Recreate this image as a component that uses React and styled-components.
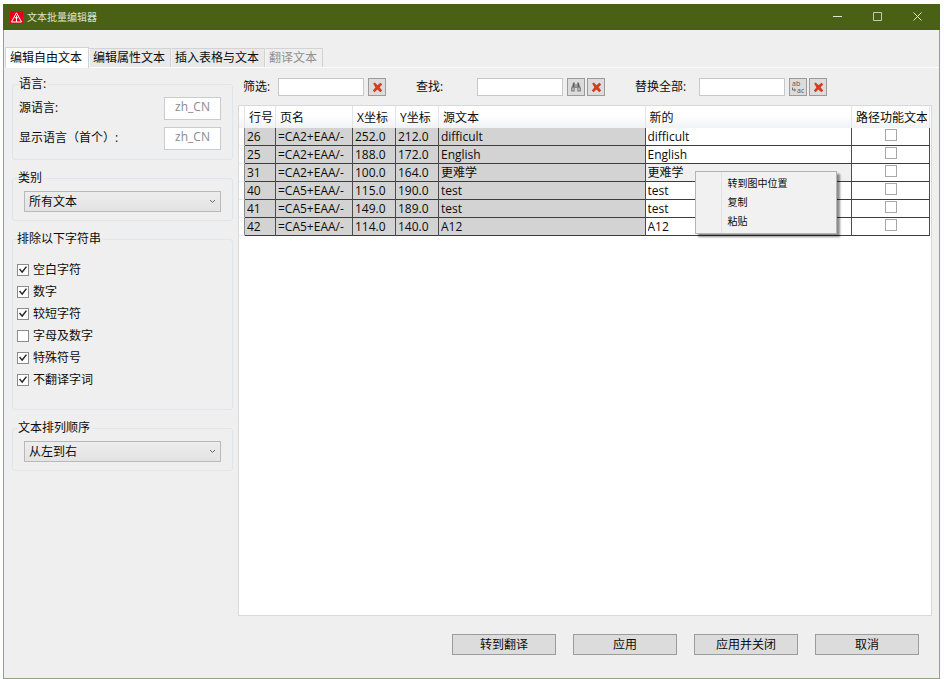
import React, { useState } from 'react';
import styled, { createGlobalStyle } from 'styled-components';

const GlobalStyle = createGlobalStyle`
    * {
        box-sizing: border-box;
    }

    body {
        margin: 0;
        background: #fdfdfd;
        color: #0c0c0c;
        font: 12px/16px "Open Sans", "Noto Sans CJK SC", sans-serif;
    }

    button, input, select {
        font: inherit;
        color: inherit;
        margin: 0;
        border-radius: 0;
    }
`;

const Window = styled.main`
    display: flex;
    flex-direction: column;
    min-height: calc(100vh - 4px);
    margin: 4px 4px 0 3px;
    background: #efefef;
    border: 1px solid #96a37c;
    border-top: none;
`;

const TitleBar = styled.header`
    display: flex;
    align-items: center;
    height: 26px;
    margin: 0 -1px;
    padding: 0 2px 0 7px;
    background: #4a6015;
    color: #dfe3d4;

    h1 {
        flex: 1;
        margin: 0 0 0 4px;
        font-size: 10px;
        font-weight: normal;
    }
`;

const WindowButton = styled.button`
    display: flex;
    align-items: center;
    justify-content: center;
    width: 40px;
    height: 26px;
    padding: 0;
    border: none;
    background: transparent;

    &:hover {
        background: #60772a;
    }
`;

const Tabs = styled.nav`
    display: flex;
    align-items: flex-end;
    height: 38px;
    padding-left: 1px;
    border-bottom: 1px solid #fbfbfb;
`;

const Tab = styled.button`
    height: ${({ $active }) => ($active ? 21 : 19)}px;
    margin-bottom: ${({ $active }) => ($active ? -1 : 0)}px;
    padding: ${({ $active }) => ($active ? '0 6px 0 4px' : '0 5px 0 3px')};
    border: 1px solid #d3d3d3;
    border-left-color: ${({ $active }) => ($active ? '#d3d3d3' : '#f4f4f4')};
    border-bottom: none;
    background: ${({ $active }) => ($active ? '#fff' : '#e9e9e9')};
    white-space: nowrap;

    &:disabled {
        color: #8f8f8f;
        background: #efefef;
    }
`;

const Content = styled.div`
    flex: 1;
    display: flex;
    gap: 5px;
    padding: 8px 7px 0 8px;
`;

const Sidebar = styled.aside`
    display: flex;
    flex-direction: column;
    gap: 10px;
    flex: 0 0 221px;
`;

const Group = styled.fieldset`
    min-width: 0;
    margin: 0;
    padding: ${({ $pad }) => $pad || '5px 11px 8px'};
    border: 1px solid #dde6ea;
    border-radius: 3px;

    legend {
        margin-left: ${({ $legend }) => $legend || 0}px;
        padding: 0 2px 0 0;
    }
`;

const LanguageRow = styled.label`
    display: flex;
    justify-content: space-between;
    height: 30px;
    line-height: 22px;

    input {
        width: 57px;
        height: 23px;
        padding: 0 0 4px;
        border: 1px solid #c9cbce;
        background: #fff;
        color: #8b8b8b;
        text-align: center;
    }
`;

const SelectBox = styled.div`
    position: relative;

    select {
        display: block;
        width: 100%;
        height: 21px;
        padding: 0 4px;
        border: 1px solid #b9b9b9;
        background: linear-gradient(#ededed, #e3e3e3);
        appearance: none;
    }

    svg {
        position: absolute;
        top: 7px;
        right: 5px;
        pointer-events: none;
    }
`;

const CheckLabel = styled.label`
    display: flex;
    align-items: center;
    gap: 4px;
    height: 22px;
`;

const CheckBox = styled.input.attrs({ type: 'checkbox' })`
    display: grid;
    place-items: center;
    flex: none;
    width: 12px;
    height: 12px;
    border: 1px solid #8c8c8c;
    background: #fff;
    appearance: none;

    &:checked::after {
        content: "";
        width: 8px;
        height: 8px;
        background: #222;
        clip-path: polygon(0 45%, 14% 32%, 38% 62%, 86% 2%, 100% 14%, 40% 92%);
    }
`;

const Main = styled.section`
    flex: 1;
    display: flex;
    flex-direction: column;
    min-width: 0;
`;

const Toolbar = styled.div`
    display: flex;
    gap: 30px;
    padding: 2px 0 9px 5px;
`;

const SearchGroup = styled.div`
    display: flex;
    align-items: center;
    gap: 2px;

    label {
        width: ${({ $label }) => $label}px;
        margin-right: -2px;
        white-space: nowrap;
    }

    input {
        width: 86px;
        height: 18px;
        margin-right: 2px;
        padding: 0 3px;
        border: 1px solid #c6c8cb;
        background: #fff;
    }
`;

const IconButton = styled.button`
    display: flex;
    align-items: center;
    justify-content: center;
    width: 18px;
    height: 18px;
    padding: 0;
    border: 1px solid #9b9b9b;
    background: #dcdcdc;
`;

const GridArea = styled.div`
    flex: 1;
    padding-right: 1px;
    border: 1px solid #d8d9da;
    background: #fff;
`;

const Table = styled.table`
    width: 100%;
    table-layout: fixed;
    border-collapse: separate;
    border-spacing: 0;
`;

const HeadCell = styled.th`
    height: 22px;
    padding: 2px 2px 0 4px;
    border-right: 1px solid #e3e5e8;
    background: linear-gradient(#fff 40%, #f1f2f4);
    font-weight: normal;
    text-align: left;

    span {
        display: block;
        overflow: hidden;
        white-space: nowrap;
    }
`;

const Cell = styled.td`
    position: relative;
    height: 18px;
    padding: 0 1px 0 2px;
    border-right: 1px solid #4c4c4c;
    border-bottom: 1px solid #3c3c3c;
    background: ${({ $tone }) => $tone || '#d3d3d3'};
    line-height: 17px;

    > span {
        display: block;
        overflow: hidden;
        white-space: nowrap;
    }

    ${CheckBox} {
        margin: -3px auto 0;
        border-color: #a8a8a8;
    }
`;

const RowHandle = styled.td`
    padding: 0;
    border-right: 1px solid #8a8a8a;
    border-bottom: 1px solid #ededed;
`;

const Menu = styled.div`
    position: absolute;
    z-index: 1;
    top: 7px;
    left: 49px;
    width: 142px;
    padding: 2px;
    border: 1px solid #b4b4b4;
    background: linear-gradient(to right, #f1f1f1 25px, #e2e2e2 25px, #e2e2e2 26px, #f1f1f1 26px);
    box-shadow: 3px 3px 2px rgba(0, 0, 0, 0.45);

    button {
        display: block;
        width: 100%;
        height: 19px;
        padding: 0 0 0 30px;
        border: none;
        background: transparent;
        font-size: 10px;
        text-align: left;
    }
`;

const Footer = styled.footer`
    display: flex;
    justify-content: flex-end;
    gap: 17px;
    padding: 18px 13px 23px;
`;

const ActionButton = styled.button`
    width: 104px;
    height: 21px;
    padding: 0;
    border: 1px solid #9c9c9c;
    background: #dcdcdc;
`;

const Logo = () => (
    <svg width="13" height="13" viewBox="0 0 13 13">
        <rect width="13" height="13" rx="1" fill="#e2001a" />
        <path d="M6.5 1.8 11.6 11H1.4Z" fill="none" stroke="#fff" strokeWidth="1" />
        <path d="M6.5 4.6V11M4.8 6.8h3.4" stroke="#fff" strokeWidth="1" />
    </svg>
);

const Chevron = () => (
    <svg width="7" height="7" viewBox="0 0 7 7" fill="none" stroke="#666">
        <path d="M1 2 3.5 4.5 6 2" />
    </svg>
);

const Cross = () => (
    <svg width="11" height="11" viewBox="0 0 11 11">
        <path d="M1.2 1.6 2.8.6 5.5 3.3 8.4.7 10.2 2.4 7.6 5.3 10.2 8.5 8.3 10.3 5.4 7.6 2.6 10.3.8 8.6 3.4 5.4Z" fill="#d33d20" />
    </svg>
);

const Binoculars = () => (
    <svg width="12" height="12" viewBox="0 0 12 12">
        <path d="M3 1.5h2v2h2v-2h2l.6 2.6L11 7v3.5H7.2V7H4.8v3.5H1V7l1.4-2.9Z" fill="#858585" />
        <path d="M2.2 7.3h1.5v2H2.2zM8.3 7.3h1.5v2H8.3zM5.5 4.5h1V6h-1z" fill="#c8c8c8" />
        <path d="M3.5 2v4M8.5 2v4" stroke="#5f5f5f" />
    </svg>
);

const Replace = () => (
    <svg width="16" height="16" viewBox="0 0 16 16" fill="#555" fontSize="7">
        <text x="2" y="7">ab</text>
        <text x="7" y="14">ac</text>
        <path d="M2.5 8.500v2.500h3M4.200 9.800 5.500 11 4.200 12.200" fill="none" stroke="#555" strokeWidth="0.8" />
    </svg>
);

const filters = [
    '空白字符',
    '数字',
    '较短字符',
    '字母及数字',
    '特殊符号',
    '不翻译字词',
];

const columns = [
    { title: '行号', width: 31 },
    { title: '页名', width: 77 },
    { title: 'X坐标', width: 43 },
    { title: 'Y坐标', width: 43 },
    { title: '源文本' },
    { title: '新的' },
    { title: '路径功能文本', width: 78 },
];

const rows = [
    { id: 26, page: '=CA2+EAA/-', x: '252.0', y: '212.0', text: 'difficult' },
    { id: 25, page: '=CA2+EAA/-', x: '188.0', y: '172.0', text: 'English' },
    { id: 31, page: '=CA2+EAA/-', x: '100.0', y: '164.0', text: '更难学' },
    { id: 40, page: '=CA5+EAA/-', x: '115.0', y: '190.0', text: 'test' },
    { id: 41, page: '=CA5+EAA/-', x: '149.0', y: '189.0', text: 'test' },
    { id: 42, page: '=CA5+EAA/-', x: '114.0', y: '140.0', text: 'A12' },
];

const App = () => {
    const [tab, setTab] = useState(0);
    const [menuRow, setMenuRow] = useState(31);

    function openMenu(e, id) {
        e.preventDefault();
        setMenuRow(id);
    }

    function closeMenu() {
        setMenuRow(null);
    }

    return (
        <Window>
            <GlobalStyle />

            <TitleBar>
                <Logo />
                <h1>文本批量编辑器</h1>
                <WindowButton aria-label="最小化">
                    <svg width="10" height="10" stroke="#dfe3d4"><path d="M0 4.5h9" /></svg>
                </WindowButton>
                <WindowButton aria-label="最大化">
                    <svg width="10" height="10" fill="none" stroke="#c3cbae"><path d="M.5 .5h8v8h-8z" /></svg>
                </WindowButton>
                <WindowButton aria-label="关闭">
                    <svg width="10" height="10" stroke="#dfe3d4"><path d="M.5 .5l8 8M8.5 .5l-8 8" /></svg>
                </WindowButton>
            </TitleBar>

            <Tabs>
                {['编辑自由文本', '编辑属性文本', '插入表格与文本', '翻译文本'].map((name, i) => (
                    <Tab key={name} $active={tab === i} disabled={i === 3} onClick={() => setTab(i)}>{name}</Tab>
                ))}
            </Tabs>

            <Content>
                <Sidebar>
                    <Group $pad="5px 11px 2px 6px">
                        <legend>语言:</legend>
                        <LanguageRow>
                            源语言:
                            <input value="zh_CN" disabled readOnly />
                        </LanguageRow>
                        <LanguageRow>
                            显示语言（首个）:
                            <input value="zh_CN" disabled readOnly />
                        </LanguageRow>
                    </Group>

                    <Group $legend={-6}>
                        <legend>类别</legend>
                        <SelectBox>
                            <select aria-label="类别"><option>所有文本</option></select>
                            <Chevron />
                        </SelectBox>
                    </Group>

                    <Group $pad="12px 4px 18px">
                        <legend>排除以下字符串</legend>
                        {filters.map(name => (
                            <CheckLabel key={name}>
                                <CheckBox defaultChecked={name !== '字母及数字'} />
                                {name}
                            </CheckLabel>
                        ))}
                    </Group>

                    <Group $legend={-6}>
                        <legend>文本排列顺序</legend>
                        <SelectBox>
                            <select aria-label="文本排列顺序"><option>从左到右</option></select>
                            <Chevron />
                        </SelectBox>
                    </Group>
                </Sidebar>

                <Main>
                    <Toolbar>
                        <SearchGroup $label={35}>
                            <label htmlFor="filter">筛选:</label>
                            <input id="filter" />
                            <IconButton aria-label="清除筛选"><Cross /></IconButton>
                        </SearchGroup>
                        <SearchGroup $label={61}>
                            <label htmlFor="find">查找:</label>
                            <input id="find" />
                            <IconButton aria-label="查找"><Binoculars /></IconButton>
                            <IconButton aria-label="清除查找"><Cross /></IconButton>
                        </SearchGroup>
                        <SearchGroup $label={64}>
                            <label htmlFor="replace">替换全部:</label>
                            <input id="replace" />
                            <IconButton aria-label="替换全部"><Replace /></IconButton>
                            <IconButton aria-label="清除替换"><Cross /></IconButton>
                        </SearchGroup>
                    </Toolbar>

                    <GridArea onClick={closeMenu}>
                        <Table>
                            <colgroup>
                                <col width="6" />
                                {columns.map(({ title, width }) => <col key={title} width={width} />)}
                            </colgroup>
                            <thead>
                                <tr>
                                    <HeadCell />
                                    {columns.map(({ title }) => (
                                        <HeadCell key={title}><span>{title}</span></HeadCell>
                                    ))}
                                </tr>
                            </thead>
                            <tbody>
                                {rows.map(row => (
                                    <tr key={row.id} onContextMenu={e => openMenu(e, row.id)}>
                                        <RowHandle />
                                        <Cell><span>{row.id}</span></Cell>
                                        <Cell><span>{row.page}</span></Cell>
                                        <Cell><span>{row.x}</span></Cell>
                                        <Cell><span>{row.y}</span></Cell>
                                        <Cell><span>{row.text}</span></Cell>
                                        <Cell $tone={menuRow === row.id ? '#f0f0f0' : '#fff'}>
                                            <span>{row.text}</span>
                                            {menuRow === row.id && (
                                                <Menu>
                                                    <button>转到图中位置</button>
                                                    <button>复制</button>
                                                    <button>粘贴</button>
                                                </Menu>
                                            )}
                                        </Cell>
                                        <Cell $tone="#fff"><CheckBox aria-label="路径功能文本" /></Cell>
                                    </tr>
                                ))}
                            </tbody>
                        </Table>
                    </GridArea>

                    <Footer>
                        <ActionButton>转到翻译</ActionButton>
                        <ActionButton>应用</ActionButton>
                        <ActionButton>应用并关闭</ActionButton>
                        <ActionButton>取消</ActionButton>
                    </Footer>
                </Main>
            </Content>
        </Window>
    );
};

export default App;
